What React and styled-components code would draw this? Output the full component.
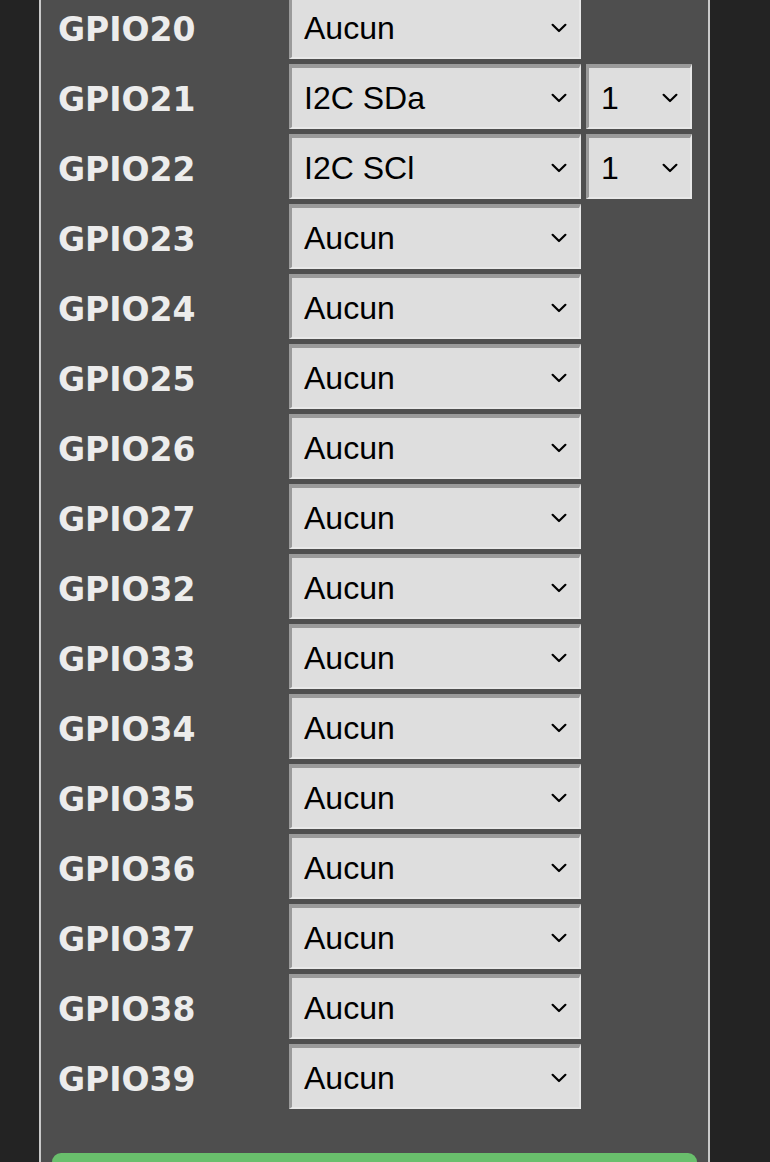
import React from 'react';
import styled, { createGlobalStyle } from 'styled-components';

const GlobalStyle = createGlobalStyle`
  html, body {
    margin: 0;
    padding: 0;
    background: #232323;
  }
  body {
    font-family: "Liberation Sans", Arial, sans-serif;
    overflow: hidden;
  }
`;

const Page = styled.div`
  width: 770px;
  height: 1162px;
  overflow: hidden;
`;

const Panel = styled.div`
  box-sizing: border-box;
  margin: -12px 0 0 39px;
  width: 671px;
  padding: 6px 11px 0 11px;
  background: #4e4e4e;
  border-left: 2px solid #c9c9c9;
  border-right: 2px solid #c9c9c9;
`;

const PinGrid = styled.div`
  display: grid;
  grid-template-columns: 232px 292px 106px;
  grid-auto-rows: 65px;
  column-gap: 5px;
  row-gap: 5px;
  align-items: center;
`;

const PinLabel = styled.div`
  padding: 5px 0 0 6px;
  font-family: "DejaVu Sans", Verdana, sans-serif;
  font-weight: bold;
  font-size: 33px;
  color: #ececec;
`;

const SelectWrap = styled.div`
  position: relative;
  height: 65px;
`;

const Select = styled.select`
  appearance: none;
  box-sizing: border-box;
  width: 100%;
  height: 100%;
  margin: 0;
  padding: 0 30px 0 12px;
  font-family: "Liberation Sans", Arial, sans-serif;
  font-size: 32px;
  color: #000;
  background: #dedede;
  border-style: solid;
  border-width: 4px 2px 2px 3px;
  border-color: #9a9a9a #e8e8e8 #e8e8e8 #9a9a9a;
  border-radius: 0;
  outline: none;
`;

const Chevron = styled.svg`
  position: absolute;
  top: 50%;
  right: 14px;
  width: 16px;
  height: 10px;
  margin-top: -4px;
  pointer-events: none;
`;

const SaveButton = styled.button`
  display: block;
  width: 100%;
  height: 80px;
  margin-top: 44px;
  border: none;
  border-radius: 9px;
  background: #69bf6c;
`;

const pins = [
  { name: 'GPIO20', mode: 'Aucun' },
  { name: 'GPIO21', mode: 'I2C SDa', bus: '1' },
  { name: 'GPIO22', mode: 'I2C SCl', bus: '1' },
  { name: 'GPIO23', mode: 'Aucun' },
  { name: 'GPIO24', mode: 'Aucun' },
  { name: 'GPIO25', mode: 'Aucun' },
  { name: 'GPIO26', mode: 'Aucun' },
  { name: 'GPIO27', mode: 'Aucun' },
  { name: 'GPIO32', mode: 'Aucun' },
  { name: 'GPIO33', mode: 'Aucun' },
  { name: 'GPIO34', mode: 'Aucun' },
  { name: 'GPIO35', mode: 'Aucun' },
  { name: 'GPIO36', mode: 'Aucun' },
  { name: 'GPIO37', mode: 'Aucun' },
  { name: 'GPIO38', mode: 'Aucun' },
  { name: 'GPIO39', mode: 'Aucun' }
];

const modes = ['Aucun', 'I2C SDa', 'I2C SCl', 'Entrée', 'Sortie'];

const Dropdown = ({ value, options }) => (
  <SelectWrap>
    <Select defaultValue={value}>
      {options.map((o) => (
        <option key={o} value={o}>
          {o}
        </option>
      ))}
    </Select>
    <Chevron viewBox="0 0 16 10">
      <path
        d="M1.6 1.8 L8 8 L14.4 1.8"
        fill="none"
        stroke="#000"
        strokeWidth="2.2"
        strokeLinecap="round"
        strokeLinejoin="round"
      />
    </Chevron>
  </SelectWrap>
);

const App = () => (
  <Page>
    <GlobalStyle />
    <Panel>
      <PinGrid>
        {pins.map((pin) => (
          <React.Fragment key={pin.name}>
            <PinLabel>{pin.name}</PinLabel>
            <Dropdown value={pin.mode} options={modes} />
            {pin.bus ? <Dropdown value={pin.bus} options={['0', '1']} /> : <div />}
          </React.Fragment>
        ))}
      </PinGrid>
      <SaveButton type="submit" aria-label="Enregistrer" />
    </Panel>
  </Page>
);

export default App;
